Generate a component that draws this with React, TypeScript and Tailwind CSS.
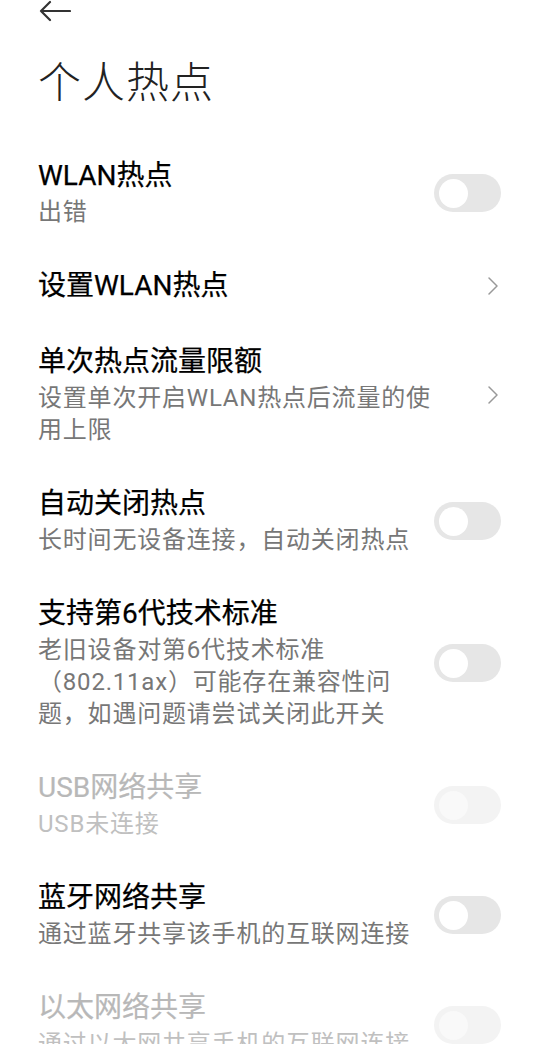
import React from "react";

type Row = {
  title: string;
  lines?: string[];
  kind: "toggle" | "chevron";
  disabled?: boolean;
};

const rows: Row[] = [
  { title: "WLAN热点", lines: ["出错"], kind: "toggle" },
  { title: "设置WLAN热点", kind: "chevron" },
  {
    title: "单次热点流量限额",
    lines: ["设置单次开启WLAN热点后流量的使", "用上限"],
    kind: "chevron",
  },
  { title: "自动关闭热点", lines: ["长时间无设备连接，自动关闭热点"], kind: "toggle" },
  {
    title: "支持第6代技术标准",
    lines: ["老旧设备对第6代技术标准", "（802.11ax）可能存在兼容性问", "题，如遇问题请尝试关闭此开关"],
    kind: "toggle",
  },
  { title: "USB网络共享", lines: ["USB未连接"], kind: "toggle", disabled: true },
  { title: "蓝牙网络共享", lines: ["通过蓝牙共享该手机的互联网连接"], kind: "toggle" },
  { title: "以太网络共享", lines: ["通过以太网共享手机的互联网连接"], kind: "toggle", disabled: true },
];

function Toggle({ disabled }: { disabled?: boolean }) {
  return (
    <div
      className={`flex h-[38px] w-[67px] shrink-0 items-center rounded-full px-[5px] ${
        disabled ? "bg-[#f3f3f3]" : "bg-[#e6e6e6]"
      }`}
    >
      <div className={`h-[29px] w-[29px] rounded-full ${disabled ? "bg-[#f9f9f9]" : "bg-white"}`} />
    </div>
  );
}

function Chevron() {
  return (
    <svg width="14" height="20" viewBox="0 0 14 20" className="mr-[2px] shrink-0">
      <path d="M4 2 L12 10 L4 18" fill="none" stroke="#999" strokeWidth="1.5" strokeLinecap="round" strokeLinejoin="round" />
    </svg>
  );
}

function SettingRow({ row }: { row: Row }) {
  return (
    <div className="flex items-center justify-between py-5">
      <div className="flex flex-col">
        <div
          className={`text-[28px] font-normal leading-[36px] ${
            row.disabled
              ? "text-[#b8b8b8] [-webkit-text-stroke:0.2px_#b8b8b8]"
              : "text-black [-webkit-text-stroke:0.25px_#000]"
          }`}
        >
          {row.title}
        </div>
        {row.lines && (
          <div
            className={`mt-[2px] text-[24px] leading-[32px] tracking-[0.8px] ${
              row.disabled ? "text-[#c0c0c0]" : "text-[#777]"
            }`}
          >
            {row.lines.map((l) => (
              <div key={l} className="whitespace-nowrap">
                {l}
              </div>
            ))}
          </div>
        )}
      </div>
      {row.kind === "toggle" ? <Toggle disabled={row.disabled} /> : <Chevron />}
    </div>
  );
}

export default function App() {
  return (
    <div
      className="h-[1044px] w-[540px] overflow-hidden bg-white pl-[38px] pr-[39px]"
      style={{ fontFamily: "Roboto, 'Noto Sans CJK SC', sans-serif" }}
    >
      <div className="flex h-[22px] items-center">
        <svg width="32" height="24" viewBox="0 0 32 24" className="ml-[1px]">
          <path d="M2 12 H31 M11 3 L2 12 L11 21" fill="none" stroke="#333" strokeWidth="2.2" strokeLinecap="round" strokeLinejoin="round" />
        </svg>
      </div>
      <h1 className="mt-[36px] text-[43px] font-light leading-[50px] tracking-[1px] text-[#222]">个人热点</h1>
      <div className="mt-[30px]">
        {rows.map((r) => (
          <SettingRow key={r.title} row={r} />
        ))}
      </div>
    </div>
  );
}
